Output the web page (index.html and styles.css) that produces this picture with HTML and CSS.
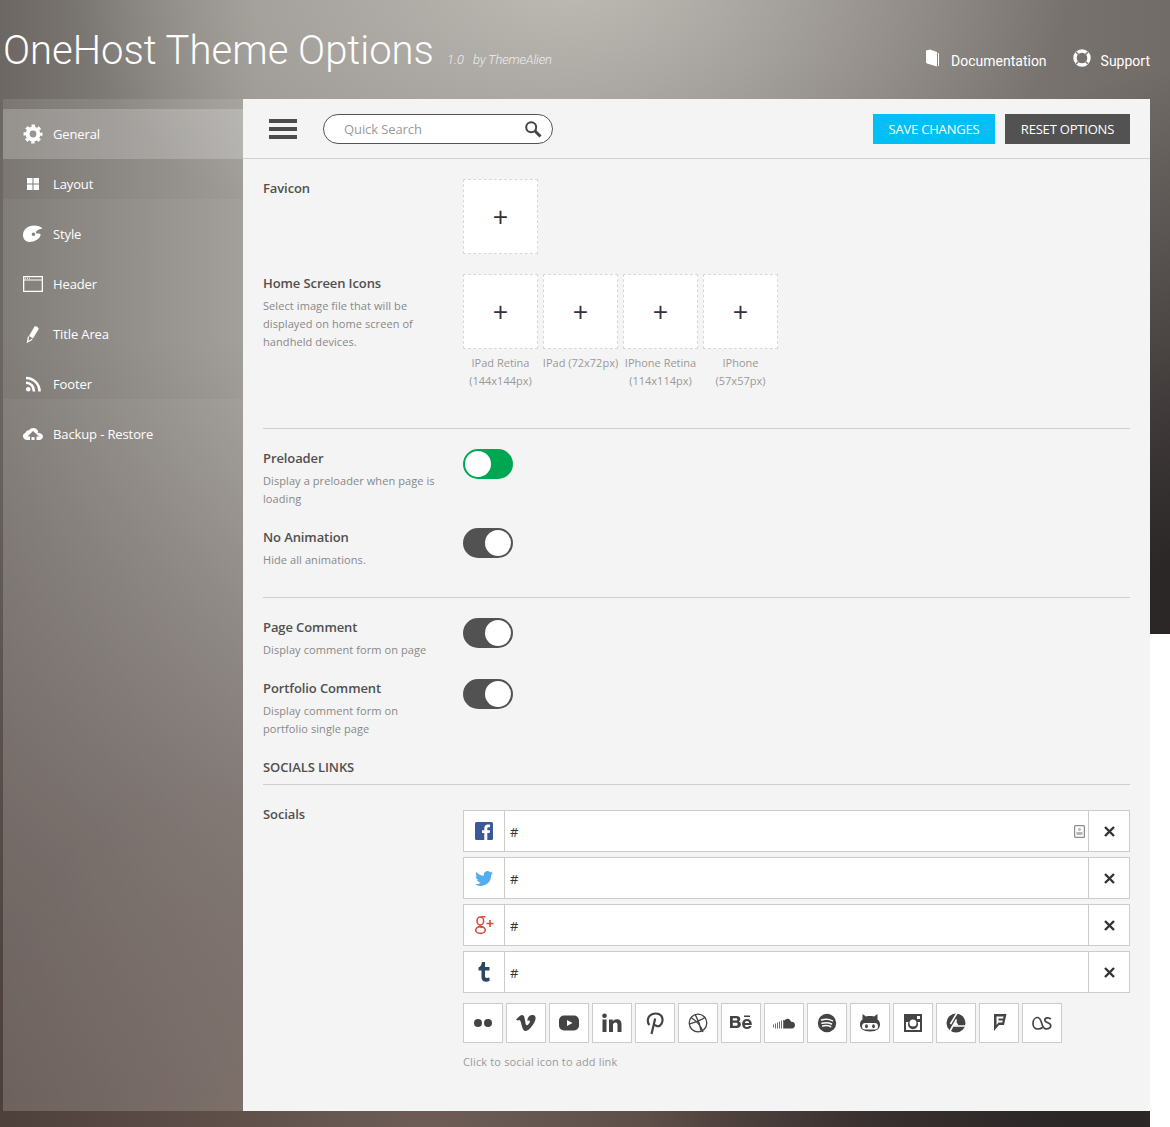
FILE: index.html
```html
<!DOCTYPE html>
<html lang="en">
<head>
  <meta charset="UTF-8" />
  <title>OneHost Theme Options</title>
  <link rel="stylesheet" href="styles.css">
</head>
<body>
<div class="page">
  <header class="top">
    <h1>OneHost Theme Options</h1>
    <span class="version">1.0</span>
    <span class="author">by ThemeAlien</span>
    <nav class="toplinks">
      <a href="#"><svg width="16" height="18" viewBox="0 0 16 18"><path fill="#fff" d="M1 1.500 5 .5l7 2.500v14.500L2 14.500 1 13.500z"/><path fill="none" stroke="#fff" d="M13.500 4v13"/></svg>Documentation</a>
      <a href="#"><svg width="18" height="18" viewBox="0 0 18 18"><circle cx="9" cy="9" r="7" fill="none" stroke="#fff" stroke-width="3.400"/><path stroke="#7f7a76" stroke-width="1.500" d="m3 3 3.500 3.500M15 3l-3.500 3.500M3 15l3.500-3.500M15 15l-3.500-3.500"/></svg>Support</a>
    </nav>
  </header>

  <div class="shell">
    <!-- side menu -->
    <aside class="side">
      <a class="active" href="#"><svg width="20" height="20" viewBox="0 0 20 20"><circle cx="10" cy="10" r="5.400" fill="none" stroke="#fff" stroke-width="4"/><circle cx="10" cy="10" r="8.200" fill="none" stroke="#fff" stroke-width="2.600" stroke-dasharray="3.400 3.040" stroke-dashoffset="1.700"/></svg><span>General</span></a>
      <a href="#"><svg width="20" height="20" viewBox="0 0 20 20"><path fill="#fff" d="M4 4h5.500v5.500H4zM10.500 4H16v5.500h-5.500zM4 10.500h5.500V16H4zM10.500 10.500H16V16h-5.500z"/></svg><span>Layout</span></a>
      <a href="#"><svg width="20" height="20" viewBox="0 0 20 20"><path fill="#fff" fill-rule="evenodd" d="M11 1.500c3.800 0 7 1.300 8.500 3-2.500.3-6 1.500-6.500 3.700-.2 1.300 1.400 1.500 2.800 1.400 1.600-.1 2.400 1 1.400 2.700C15.500 15.500 11 18 7 18 3 18 0 15.500 0 11 0 5.500 5 1.500 11 1.500zM10.500 8.500a1.800 1.800 0 1 0 0 3.600 1.800 1.800 0 0 0 0-3.600z"/></svg><span>Style</span></a>
      <a href="#"><svg width="20" height="16" viewBox="0 0 20 16"><path fill="none" stroke="#fff" stroke-width="1.300" d="M.650.650h18.700v14.700H.650z"/><path fill="#fff" d="M1 3.500h18v1.100H1zM2 1.800h1v1H2zM4 1.800h1v1H4zM6 1.800h1v1H6z"/></svg><span>Header</span></a>
      <a href="#"><svg width="20" height="20" viewBox="0 0 20 20"><path fill="#fff" d="M11.500 2.500c1-1.300 4.800 1.300 4 2.700L10 14.500l-4-2.500z"/><path fill="none" stroke="#fff" stroke-width="1.300" d="m5.500 12.500-1 5.500 4.800-2.700"/></svg><span>Title Area</span></a>
      <a href="#"><svg width="20" height="20" viewBox="0 0 20 20"><circle cx="5.300" cy="15.200" r="2.300" fill="#fff"/><path fill="none" stroke="#fff" stroke-width="2.600" d="M3 8.800c4.600 0 8 3.500 8 8.700M3 4c7.500 0 13.500 6 13.500 13.500"/></svg><span>Footer</span></a>
      <a href="#"><svg width="20" height="20" viewBox="0 0 20 20"><path fill="#fff" fill-rule="evenodd" d="M4.500 16C2 16 0 14.300 0 12.200 0 10.500 1 9.300 2.600 8.800 3 6.800 4.500 6 6 6.300 7 4.800 8.600 4 10.300 4c3 0 5 2.200 5 5 2.500 0 4.700 1.300 4.700 3.600 0 2-1.900 3.400-4 3.400h-2.500v-3.500H16L10 7l-5.500 5.500h2.500V16z"/><path fill="#fff" d="M8.500 13h3v3h-3z"/></svg><span>Backup - Restore</span></a>
    </aside>

    <main class="panel">
      <div class="toolbar">
        <svg class="burger" width="28" height="20" viewBox="0 0 28 20"><path fill="#4c4c4c" d="M0 0h28v4H0zM0 8h28v4H0zM0 16h28v4H0z"/></svg>
        <label class="search">
          <span>Quick Search</span>
          <svg width="18" height="18" viewBox="0 0 18 18"><circle cx="7.200" cy="7.200" r="5" fill="none" stroke="#444" stroke-width="2"/><path stroke="#444" stroke-width="3" d="m11 11 5.500 5.500"/></svg>
        </label>
        <button class="btn save">SAVE CHANGES</button>
        <button class="btn reset">RESET OPTIONS</button>
      </div>

      <section class="content">
        <div class="row favicon">
          <div class="info"><h3>Favicon</h3></div>
          <div class="uploads"><div class="up"><div class="box">+</div></div></div>
        </div>

        <div class="row homeicons">
          <div class="info">
            <h3>Home Screen Icons</h3>
            <p>Select image file that will be displayed on home screen of handheld devices.</p>
          </div>
          <div class="uploads">
            <div class="up"><div class="box">+</div><small>IPad Retina (144x144px)</small></div>
            <div class="up"><div class="box">+</div><small class="nowrap">IPad (72x72px)</small></div>
            <div class="up"><div class="box">+</div><small>IPhone Retina (114x114px)</small></div>
            <div class="up"><div class="box">+</div><small>IPhone (57x57px)</small></div>
          </div>
        </div>

        <hr class="rule">

        <div class="row preloader">
          <div class="info">
            <h3>Preloader</h3>
            <p>Display a preloader when page is loading</p>
          </div>
          <div class="toggle on"><i></i></div>
        </div>
        <div class="row noanim">
          <div class="info">
            <h3>No Animation</h3>
            <p>Hide all animations.</p>
          </div>
          <div class="toggle"><i></i></div>
        </div>

        <hr class="rule">

        <div class="row pagecomment">
          <div class="info">
            <h3>Page Comment</h3>
            <p>Display comment form on page</p>
          </div>
          <div class="toggle"><i></i></div>
        </div>
        <div class="row portfolio">
          <div class="info">
            <h3>Portfolio Comment</h3>
            <p>Display comment form on portfolio single page</p>
          </div>
          <div class="toggle"><i></i></div>
        </div>

        <h4 class="heading">SOCIALS LINKS</h4>

        <div class="row socials">
          <div class="info"><h3>Socials</h3></div>
          <div class="socialcol">
            <div class="link">
              <span class="ico"><svg width="18" height="18" viewBox="0 0 18 18"><rect width="18" height="18" rx="1.500" fill="#3b5998"/><path fill="#fff" d="M12.300 18v-7h2.300l.4-2.800h-2.700V6.500c0-.8.300-1.300 1.400-1.300H15V2.700c-.3 0-1.100-.1-2.100-.1-2.100 0-3.600 1.300-3.600 3.600v2H7V11h2.300v7z"/></svg></span>
              <span class="val">#</span>
              <svg class="autofill" width="11" height="13" viewBox="0 0 11 13"><rect x=".6" y=".6" width="9.800" height="11.800" rx="1" fill="none" stroke="#8c8c8c" stroke-width="1.200"/><circle cx="5.500" cy="4.500" r="1.400" fill="#b5b5b5"/><path fill="#b5b5b5" d="M2.500 7h6v3h-6z"/></svg>
              <span class="del"><svg width="11" height="11" viewBox="0 0 11 11"><path stroke="#333" stroke-width="2.400" d="m1 1 9 9M10 1l-9 9"/></svg></span>
            </div>
            <div class="link">
              <span class="ico"><svg width="18" height="15" viewBox="0 0 18 15"><path fill="#55acee" d="M18 1.800c-.7.300-1.400.5-2.100.6.800-.5 1.300-1.200 1.600-2-.7.400-1.500.7-2.300.9A3.700 3.700 0 0 0 8.900 4.700C5.900 4.500 3.200 3.100 1.300.9c-1 1.700-.5 3.800 1.100 4.900-.6 0-1.200-.2-1.700-.5 0 1.800 1.300 3.300 3 3.700-.5.100-1.100.2-1.700.1.500 1.500 1.900 2.500 3.500 2.600A7.400 7.400 0 0 1 0 13.200 10.500 10.500 0 0 0 16.200 4c.7-.6 1.300-1.300 1.800-2.200z"/></svg></span>
              <span class="val">#</span>
              <span class="del"><svg width="11" height="11" viewBox="0 0 11 11"><path stroke="#333" stroke-width="2.400" d="m1 1 9 9M10 1l-9 9"/></svg></span>
            </div>
            <div class="link">
              <span class="ico"><svg width="20" height="20" viewBox="0 0 20 20"><g fill="none" stroke="#dd4b39" stroke-width="1.600"><ellipse cx="6.300" cy="6" rx="3.300" ry="4"/><ellipse cx="6.500" cy="15" rx="4.800" ry="3.400"/><path d="M6.500 10c-1.200 1 .5 2 1.500 2.800M7 1.800h4.500M12.500 8.500h7M16 5v7"/></g></svg></span>
              <span class="val">#</span>
              <span class="del"><svg width="11" height="11" viewBox="0 0 11 11"><path stroke="#333" stroke-width="2.400" d="m1 1 9 9M10 1l-9 9"/></svg></span>
            </div>
            <div class="link">
              <span class="ico"><svg width="12" height="20" viewBox="0 0 12 20"><path fill="#2c4762" d="M4 0h3v5h4.500v3.500H7v6c0 1.500 1.800 1.800 4.500 1V19c-4 1.500-8 .5-8-3.500V8.500H.5V5.500C2.500 5 3.500 3 4 0z"/></svg></span>
              <span class="val">#</span>
              <span class="del"><svg width="11" height="11" viewBox="0 0 11 11"><path stroke="#333" stroke-width="2.400" d="m1 1 9 9M10 1l-9 9"/></svg></span>
            </div>

            <div class="icons">
              <span><svg width="20" height="20" viewBox="0 0 20 20"><circle cx="5" cy="10" r="4" fill="#444"/><circle cx="15" cy="10" r="4" fill="#444"/></svg></span>
              <span><svg width="20" height="20" viewBox="0 0 20 20"><path fill="#444" d="M0 6.500 4 2.800c2.300-1.500 4-.8 4.500 2L9.700 11c.8 1.700 1.500 1.500 3 0 2-2.300 1.500-4-1.500-3.200C11.800 3.500 14 1.500 17 2c3 .5 3.300 3.500 1.500 7-2 3.700-5.500 8.500-8.500 9-2.500.3-3.500-2.500-4.300-5.500C4.800 9 4.500 5.500 1.800 7.500z"/></svg></span>
              <span><svg width="20" height="20" viewBox="0 0 20 20"><rect y="2.500" width="20" height="15" rx="5" fill="#444"/><path fill="#fff" d="m8 7 5.500 3L8 13z"/></svg></span>
              <span><svg width="20" height="20" viewBox="0 0 20 20"><path fill="#444" d="M.5 6.500h4V19h-4zM7 6.500h3.800v1.800C11.500 7 13 6.200 15 6.200c3.300 0 4.500 2.100 4.500 5.300V19h-4v-7c0-1.500-.5-2.500-1.900-2.500-1.600 0-2.600 1-2.600 2.800V19H7z"/><circle cx="2.500" cy="2.800" r="2.300" fill="#444"/></svg></span>
              <span><svg width="20" height="24" viewBox="0 0 20 24"><path fill="none" stroke="#444" stroke-width="2.200" d="M4.500 14C2 11.500 2.300 7 5 4.500 8 1.800 13.500 1.800 16 4.500c2.500 3 1.800 8-1 10-2 1.300-4.300.8-5-1M10.200 7.500 6.500 23"/></svg></span>
              <span><svg width="20" height="20" viewBox="0 0 20 20"><g fill="none" stroke="#444" stroke-width="1.300"><circle cx="10" cy="10" r="8.800"/><path d="M3 4.500c4 2.500 10 8 12 14.500M1.300 11c5-1.500 12-3.500 16-7M7 1.700c2 3 5 9 6 16"/></g></svg></span>
              <span><svg width="22" height="20" viewBox="0 0 22 20"><path fill="#444" fill-rule="evenodd" d="M0 3h6.500c2.500 0 3.800 1.200 3.800 3 0 1.100-.6 2-1.500 2.400 1.300.4 2.100 1.500 2.100 2.900 0 2.300-1.700 3.700-4.200 3.700H0zM2.800 5.300v2.300h3c1 0 1.500-.4 1.500-1.200 0-.7-.5-1.100-1.500-1.100zM2.800 9.800v3h3.200c1.100 0 1.700-.6 1.700-1.500s-.6-1.500-1.700-1.500zM17 6c2.900 0 4.800 2 4.800 5v.9h-7c.1 1.400 1 2.100 2.300 2.100.9 0 1.500-.3 1.800-1h2.700c-.5 1.900-2.200 3-4.500 3-3 0-5-1.900-5-5s2-5 4.900-5zM14.900 10h4.200c-.1-1.200-.9-1.900-2.100-1.900s-1.900.7-2.100 1.900zM14 2.500h6V4h-6z"/></svg></span>
              <span><svg width="22" height="11" viewBox="0 0 22 11"><path fill="#444" d="M11 10.500V3c.8-1.500 2.500-2.500 4-2.200 1.700.3 2.600 1.500 2.900 3 1.900-.5 4.100.6 4.100 3.300 0 2.200-1.500 3.400-3 3.400z"/><path fill="none" stroke="#8f4f9a" d="M.5 6.500v3M2.500 5.500v5M4.500 4.500v6M6.500 3.500v7M8.500 2.500v8M10.500 2v8.500"/></svg></span>
              <span><svg width="20" height="20" viewBox="0 0 20 20"><circle cx="10" cy="10" r="9.200" fill="#444"/><path fill="none" stroke="#fff" stroke-width="1.500" stroke-linecap="round" d="M4.500 7c3.500-1 8-.8 11 .8M5 10.200c3-.8 7-.6 9.500.8M5.700 13c2.700-.6 5.700-.5 8 .7"/></svg></span>
              <span><svg width="20" height="20" viewBox="0 0 20 20"><path fill="#444" fill-rule="evenodd" d="M2.500 1 6 3.500c2.500-.6 5.500-.6 8 0L17.500 1v5.500c1.500 1 2.500 2.500 2.500 5 0 4-3 7-10 7s-10-3-10-7c0-2.500 1-4 2.500-5zM5 10c-2 0-3 1.500-3 3.500S3 16.500 5 16.500h10c2 0 3-1 3-3S17 10 15 10z"/><ellipse cx="6.500" cy="13.300" rx="1.400" ry="2" fill="#444"/><ellipse cx="13.500" cy="13.300" rx="1.400" ry="2" fill="#444"/></svg></span>
              <span><svg width="18" height="18" viewBox="0 0 18 18"><path fill="#444" fill-rule="evenodd" d="M0 0h18v18H0zM2 8v8h14V8h-2.500a5 5 0 1 1-9 0zM9 5.500a3.500 3.500 0 1 0 0 7 3.500 3.500 0 0 0 0-7zM13 2v3h3V2z"/></svg></span>
              <span><svg width="20" height="20" viewBox="0 0 20 20"><circle cx="10" cy="10" r="9.500" fill="#444"/><path fill="#fff" d="m10 8 2.500 4.500h-5z"/><path fill="none" stroke="#fff" stroke-width="1.600" d="M11 0 4.500 11M20 13H6M4 18l6.500-11.500"/></svg></span>
              <span><svg width="16" height="20" viewBox="0 0 16 20"><path fill="#444" d="M3 1h12.500L13 12H8l-5 6z"/><path fill="#fff" d="M5.500 3.500h7l-.4 2H7.500v2h4.200l-.4 2H7.500L5.500 12z"/></svg></span>
              <span><svg width="20" height="14" viewBox="0 0 20 14"><path fill="none" stroke="#444" stroke-width="1.700" d="M10.500 11.500C9 12.800 7.500 13 5.800 13 2.800 13 1 10.500 1 7.500 1 4 3 1.500 5.500 1.500c5 0 3.200 10.300 8 11.300 2.800.5 5.300-.7 5.300-3 0-3.800-6-2.300-6-5.800 0-2.500 4.500-3 6-.8"/></svg></span>
            </div>
            <p class="hint">Click to social icon to add link</p>
          </div>
        </div>
      </section>
    </main>
  </div>
</div>
</body>
</html>
```

FILE: styles.css
```css
* { box-sizing: border-box; }
html, body { margin: 0; padding: 0; }
body {
  width: 1170px;
  height: 1127px;
  overflow: hidden;
  font-family: "Open Sans", sans-serif;
  color: #444;
  /* white bit on the right under the end of the photo, then the blurred photo */
  background:
    linear-gradient(#fff, #fff) right bottom / 20px 493px no-repeat,
    radial-gradient(ellipse 620px 820px at 1240px 880px, #2b2727 40%, rgba(43,39,39,0) 100%),
    radial-gradient(ellipse 500px 300px at 570px -20px, rgba(192,188,182,.95), rgba(192,188,182,0) 100%),
    radial-gradient(ellipse 480px 450px at 430px 1150px, #6e5e57, rgba(110,94,87,0) 100%),
    linear-gradient(to bottom, rgba(74,60,56,0) 30%, #4a3c38 97%),
    linear-gradient(to right, #6c6762 0, #96938e 22%, #8f8b87 50%, #726c68 100%);
  background-color: #2b2727;
}
.page { width: 1150px; }
a { text-decoration: none; color: inherit; }

.top {
  height: 99px;
  width: 1170px;
  display: flex;
  align-items: flex-start;
  padding-left: 3px;
  color: #fff;
}
.top h1 {
  margin: 26px 0 0;
  font-family: Roboto, sans-serif;
  font-weight: 300;
  font-size: 40px;
  line-height: 49px;
  white-space: nowrap;
}
.version, .author {
  font-family: Roboto, sans-serif;
  font-style: italic;
  font-weight: 300;
  font-size: 13px;
  color: #eee;
  margin-top: 52px;
  line-height: 16px;
}
.version { margin-left: 13px; }
.author { margin-left: 9px; letter-spacing: -.2px; }
.toplinks {
  margin-left: auto;
  display: flex;
  gap: 26px;
  margin-top: 49px;
  padding-right: 20px;
  font-family: Roboto, sans-serif;
  font-size: 14px;
  line-height: 24px;
}
.toplinks a { display: flex; align-items: flex-start; }
.toplinks svg { margin-right: 10px; }
.toplinks a:first-child { margin-left: -1px; }

.shell { display: flex; padding-left: 3px; height: 1012px; }

/* the stripes in this menu don't line up with the items */
.side {
  width: 240px;
  padding-top: 10px;
  color: #fff;
  font-size: 13px;
  letter-spacing: -.12px;
  background: linear-gradient(
    rgba(255,255,255,.1) 0 100px,
    rgba(255,255,255,.14) 100px 300px,
    rgba(255,255,255,.18) 300px);
}
.side a {
  display: flex;
  align-items: center;
  height: 50px;
  padding-left: 20px;
}
.side a svg { margin-right: 10px; flex: none; }
.side .active { background: rgba(255,255,255,.2); }

.panel { width: 907px; background: #f4f4f4; }
.toolbar {
  height: 60px;
  border-bottom: 1px solid #d0d0d0;
  display: flex;
  align-items: center;
  padding: 0 20px 0 26px;
}
.burger { margin-right: 26px; flex: none; }
.search {
  width: 230px;
  height: 30px;
  border: 1px solid #555;
  border-radius: 15px;
  background: #fff;
  display: flex;
  align-items: center;
  justify-content: space-between;
  padding: 0 10px 0 20px;
  font-size: 13px;
  letter-spacing: -.1px;
  color: #999;
}
.btn {
  height: 30px;
  border: 0;
  padding: 0;
  color: #fff;
  font-family: "Open Sans", sans-serif;
  font-size: 13px;
  letter-spacing: -.2px;
}
.save { background: #00c0f3; width: 122px; margin-left: auto; }
.reset { background: #525252; width: 125px; margin-left: 10px; }

.content { padding: 20px 20px 0; }
.row { display: flex; }
.info { width: 200px; flex: none; padding-right: 20px; }
.info h3 {
  margin: 0;
  font-size: 13px;
  font-weight: 600;
  line-height: 18px;
  letter-spacing: -.1px;
  color: #505050;
}
.info p {
  margin: 5px 0 0;
  font-size: 11px;
  line-height: 18px;
  letter-spacing: .08px;
  color: #888;
}
.favicon { height: 95px; }
.uploads { display: flex; gap: 5px; }
.up { width: 75px; text-align: center; }
.box {
  width: 75px;
  height: 75px;
  background: #fff;
  border: 1px dashed #d8d8d8;
  font-size: 27px;
  line-height: 74px;
  color: #333;
}
.up small {
  display: block;
  margin-top: 5px;
  font-size: 11px;
  line-height: 18px;
  color: #999;
}
.up small.nowrap { white-space: nowrap; margin-left: -5px; margin-right: -5px; }
.homeicons { height: 154px; }
.rule { border: 0; border-top: 1px solid #cfcfcf; margin: 0 0 20px; }
.preloader { height: 79px; }
.noanim { height: 69px; }
.pagecomment { height: 61px; }
.portfolio { height: 79px; }
.toggle {
  flex: none;
  width: 50px;
  height: 30px;
  border-radius: 15px;
  background: #525252;
  padding: 2px;
  display: flex;
  justify-content: flex-end;
}
.toggle i {
  display: block;
  width: 26px;
  height: 26px;
  border-radius: 50%;
  background: #fff;
}
.toggle.on { background: #00a651; justify-content: flex-start; }

.heading {
  margin: 0;
  padding-bottom: 8px;
  font-size: 13px;
  font-weight: 600;
  line-height: 18px;
  letter-spacing: -.1px;
  color: #505050;
  border-bottom: 1px solid #cfcfcf;
}
.socials { margin-top: 20px; }
.socialcol { flex: 1; padding-top: 5px; }
.link {
  display: flex;
  align-items: center;
  height: 42px;
  margin-bottom: 5px;
  background: #fff;
  border: 1px solid #ccc;
}
.link .ico {
  width: 41px;
  height: 40px;
  flex: none;
  display: flex;
  align-items: center;
  justify-content: center;
  border-right: 1px solid #ccc;
}
.val { flex: 1; padding: 1px 0 0 5px; font-size: 13px; color: #333; }
.autofill { margin-right: 3px; }
.del {
  width: 41px;
  height: 40px;
  flex: none;
  display: flex;
  align-items: center;
  justify-content: center;
  border-left: 1px solid #ccc;
}
.icons { display: flex; gap: 3px; margin-top: 10px; }
.icons span {
  width: 40px;
  height: 40px;
  display: flex;
  align-items: center;
  justify-content: center;
  background: #fff;
  border: 1px solid #ccc;
}
.hint { margin: 10px 0 0; font-size: 11px; line-height: 18px; letter-spacing: .15px; color: #999; }
```
